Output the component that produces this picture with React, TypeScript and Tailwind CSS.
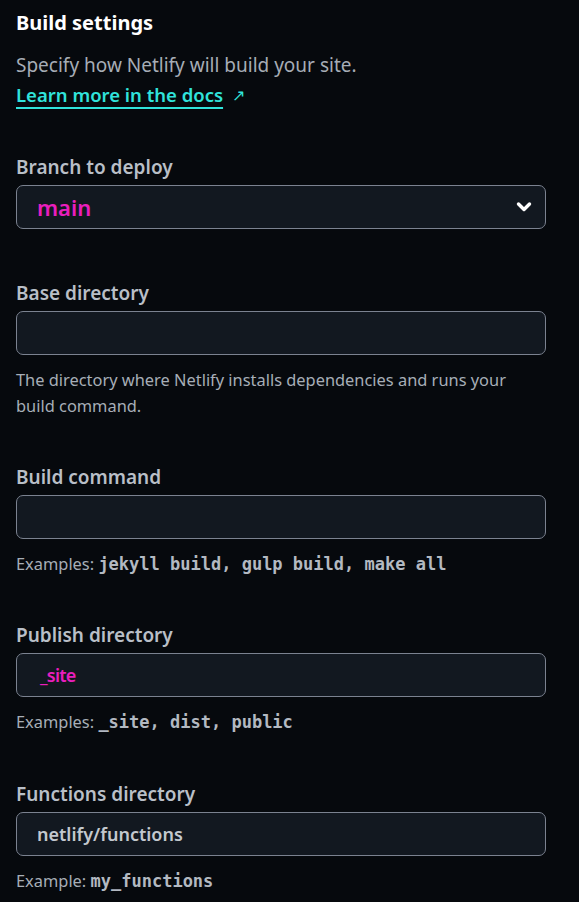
function Label({ children }: { children: React.ReactNode }) {
  return (
    <div className="text-[19px] leading-[24px] font-semibold text-[#b9bfc7]">{children}</div>
  );
}

function Field({ value, pink }: { value?: string; pink?: boolean }) {
  return (
    <div className="mt-[6px] h-[44px] w-[530px] rounded-[7px] border border-[#7b8290] bg-[#121820] flex items-center px-5">
      {value && (
        <span
          className={
            pink
              ? 'pl-[3px] text-[18px] tracking-[-0.8px] font-semibold text-[#e91ebd]'
              : 'text-[18px] font-semibold text-[#c3c8ce]'
          }
        >
          {value}
        </span>
      )}
    </div>
  );
}

function Mono({ children }: { children: React.ReactNode }) {
  return (
    <span className="font-['DejaVu_Sans_Mono',monospace] font-bold text-[17px] text-[#b3b9c1]">
      {children}
    </span>
  );
}

function Help({ children }: { children: React.ReactNode }) {
  return <div className="mt-[12px] text-[16.4px] leading-[26px] text-[#a7aeb7]">{children}</div>;
}

export default function App() {
  return (
    <div className="min-h-[902px] bg-[#06090d] px-4 pt-[9px] font-['Noto_Sans',sans-serif]">
      <h2 className="text-[20px] leading-[28px] font-bold text-white">Build settings</h2>
      <p className="mt-[15px] text-[19px] leading-[26px] text-[#a6adb6]">
        Specify how Netlify will build your site.
      </p>
      <div className="mt-[4px] flex items-center gap-[9px] text-[18.5px] leading-[26px]">
        <a className="font-semibold text-[#30e3db] underline underline-offset-[5px] decoration-2">
          Learn more in the docs
        </a>
        <span className="text-[#30e3db] text-[16px]">↗</span>
      </div>

      <div className="mt-[47px]">
        <Label>Branch to deploy</Label>
        <div className="mt-[6px] h-[44px] w-[530px] rounded-[7px] border border-[#7b8290] bg-[#121820] flex items-center justify-between pl-[20px] pr-[13px]">
          <span className="text-[22px] font-semibold text-[#e91ebd]">main</span>
          <svg width="16" height="12" viewBox="0 0 16 12" fill="none">
            <polyline
              points="2.5,3 8,8.5 13.5,3"
              stroke="white"
              strokeWidth="3.4"
              strokeLinecap="round"
              strokeLinejoin="round"
            />
          </svg>
        </div>
      </div>

      <div className="mt-[52px]">
        <Label>Base directory</Label>
        <Field />
        <Help>
          The directory where Netlify installs dependencies and runs your
          <br />
          build command.
        </Help>
      </div>

      <div className="mt-[46px]">
        <Label>Build command</Label>
        <Field />
        <Help>
          Examples: <Mono>jekyll build, gulp build, make all</Mono>
        </Help>
      </div>

      <div className="mt-[46px]">
        <Label>Publish directory</Label>
        <Field value="_site" pink />
        <Help>
          Examples: <Mono>_site, dist, public</Mono>
        </Help>
      </div>

      <div className="mt-[47px]">
        <Label>Functions directory</Label>
        <Field value="netlify/functions" />
        <Help>
          Example: <Mono>my_functions</Mono>
        </Help>
      </div>
    </div>
  );
}
